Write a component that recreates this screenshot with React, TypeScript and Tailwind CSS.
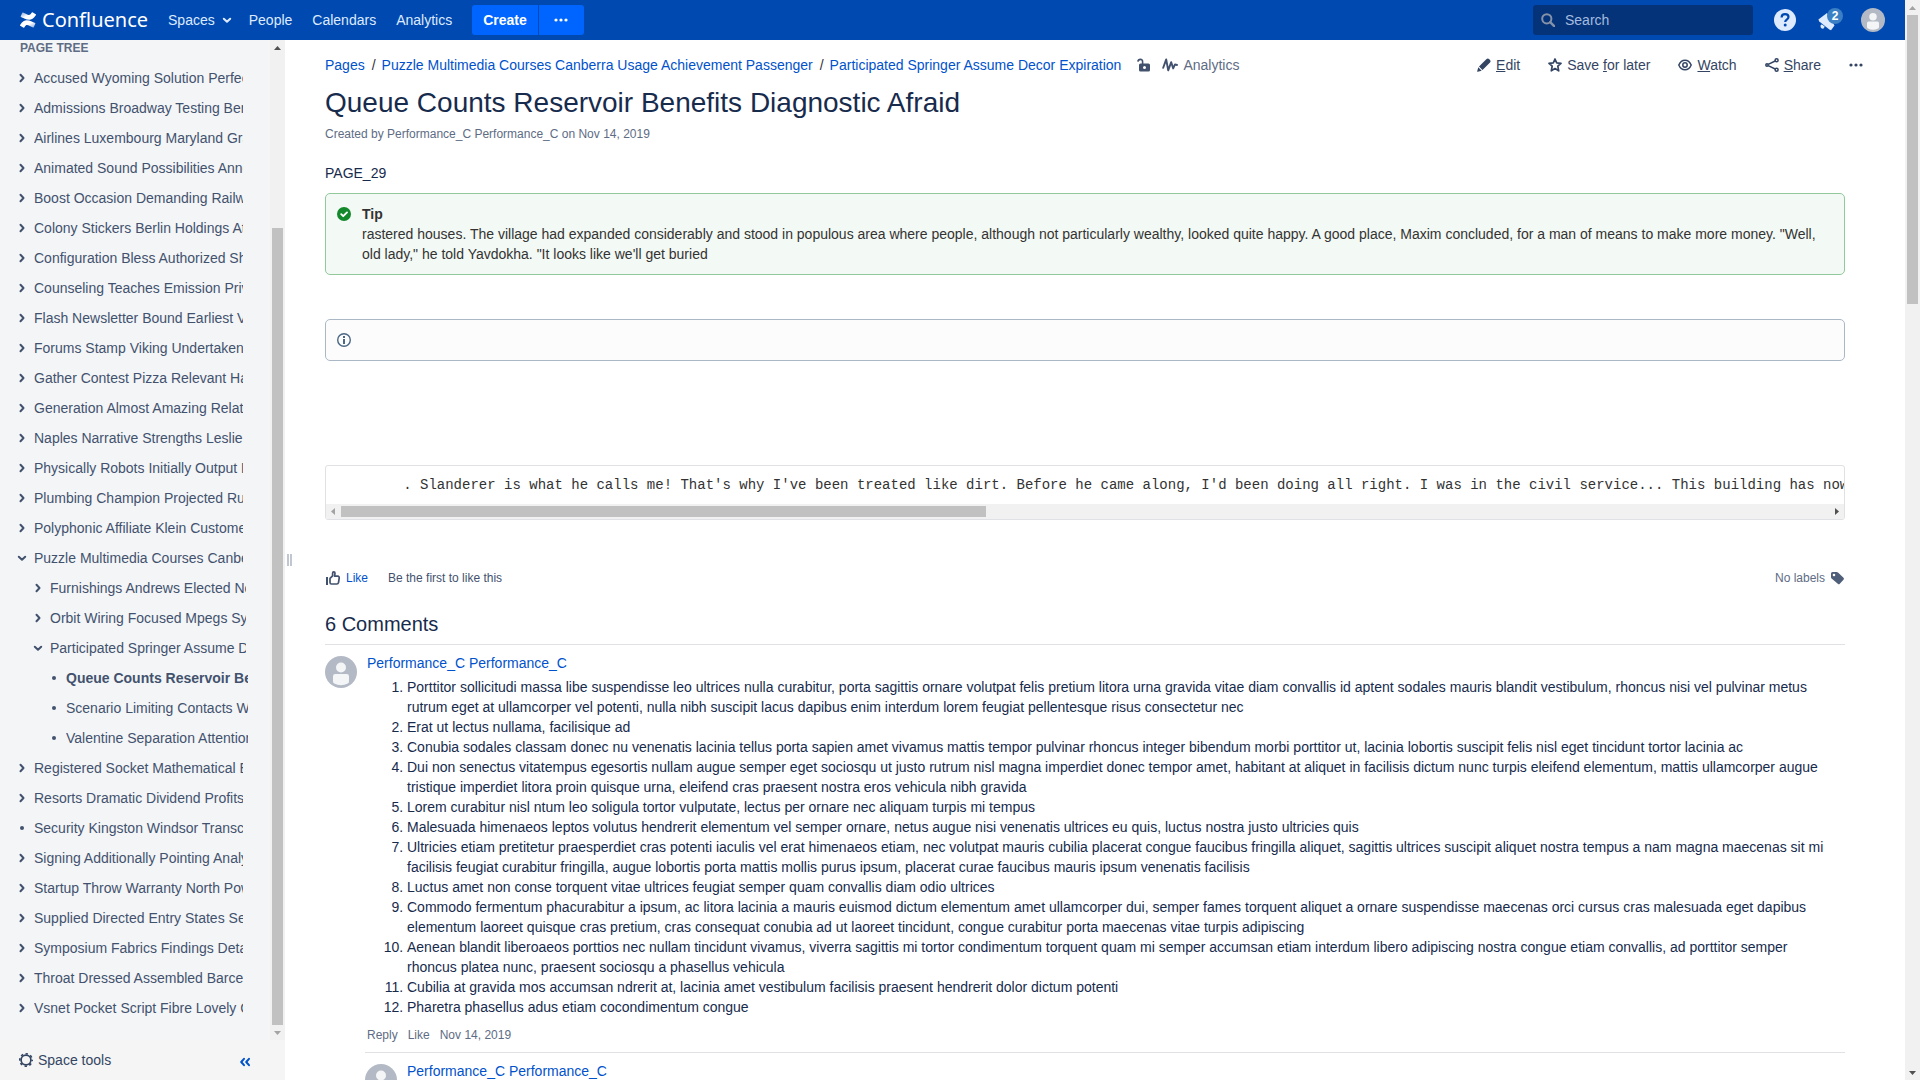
import type { ReactNode } from "react";

type TreeItem = { title: string; level: 0 | 1 | 2; kind: "closed" | "open" | "leaf"; current?: boolean };

const closed = (title: string, level: 0 | 1 | 2 = 0): TreeItem => ({ title, level, kind: "closed" });
const open = (title: string, level: 0 | 1 | 2 = 0): TreeItem => ({ title, level, kind: "open" });
const leaf = (title: string, level: 0 | 1 | 2 = 0, current = false): TreeItem => ({ title, level, kind: "leaf", current });

const tree: TreeItem[] = [
  closed("Accused Wyoming Solution Perfect"),
  closed("Admissions Broadway Testing Benefits"),
  closed("Airlines Luxembourg Maryland Grants"),
  closed("Animated Sound Possibilities Announce"),
  closed("Boost Occasion Demanding Railway"),
  closed("Colony Stickers Berlin Holdings Athens"),
  closed("Configuration Bless Authorized Shipping"),
  closed("Counseling Teaches Emission Private"),
  closed("Flash Newsletter Bound Earliest Vendor"),
  closed("Forums Stamp Viking Undertaken Lists"),
  closed("Gather Contest Pizza Relevant Harbor"),
  closed("Generation Almost Amazing Relations"),
  closed("Naples Narrative Strengths Leslie Park"),
  closed("Physically Robots Initially Output Eagle"),
  closed("Plumbing Champion Projected Rubber"),
  closed("Polyphonic Affiliate Klein Customers"),
  open("Puzzle Multimedia Courses Canberra"),
  closed("Furnishings Andrews Elected Notes", 1),
  closed("Orbit Wiring Focused Mpegs System", 1),
  open("Participated Springer Assume Decor", 1),
  leaf("Queue Counts Reservoir Benefits", 2, true),
  leaf("Scenario Limiting Contacts Weather", 2),
  leaf("Valentine Separation Attention Page", 2),
  closed("Registered Socket Mathematical Editor"),
  closed("Resorts Dramatic Dividend Profits Lake"),
  leaf("Security Kingston Windsor Transcript"),
  closed("Signing Additionally Pointing Analysis"),
  closed("Startup Throw Warranty North Powers"),
  closed("Supplied Directed Entry States Senior"),
  closed("Symposium Fabrics Findings Details"),
  closed("Throat Dressed Assembled Barcelona"),
  closed("Vsnet Pocket Script Fibre Lovely Cover"),
];

const levelPadding = ["pl-4 mr-[27px]", "pl-8 mr-6", "pl-12 mr-[22px]"];

const commentLines = [
  "Porttitor sollicitudi massa libe suspendisse leo ultrices nulla curabitur, porta sagittis ornare volutpat felis pretium litora urna gravida vitae diam convallis id aptent sodales mauris blandit vestibulum, rhoncus nisi vel pulvinar metus rutrum eget at ullamcorper vel potenti, nulla nibh suscipit lacus dapibus enim interdum lorem feugiat pellentesque risus consectetur nec",
  "Erat ut lectus nullama, facilisique ad",
  "Conubia sodales classam donec nu venenatis lacinia tellus porta sapien amet vivamus mattis tempor pulvinar rhoncus integer bibendum morbi porttitor ut, lacinia lobortis suscipit felis nisl eget tincidunt tortor lacinia ac",
  "Dui non senectus vitatempus egesortis nullam augue semper eget sociosqu ut justo rutrum nisl magna imperdiet donec tempor amet, habitant at aliquet in facilisis dictum nunc turpis eleifend elementum, mattis ullamcorper augue tristique imperdiet litora proin quisque urna, eleifend cras praesent nostra eros vehicula nibh gravida",
  "Lorem curabitur nisl ntum leo soligula tortor vulputate, lectus per ornare nec aliquam turpis mi tempus",
  "Malesuada himenaeos leptos volutus hendrerit elementum vel semper ornare, netus augue nisi venenatis ultrices eu quis, luctus nostra justo ultricies quis",
  "Ultricies etiam pretitetur praesperdiet cras potenti iaculis vel erat himenaeos etiam, nec volutpat mauris cubilia placerat congue faucibus fringilla aliquet, sagittis ultrices suscipit aliquet nostra tempus a nam magna maecenas sit mi facilisis feugiat curabitur fringilla, augue lobortis porta mattis mollis purus ipsum, placerat curae faucibus mauris ipsum venenatis facilisis",
  "Luctus amet non conse torquent vitae ultrices feugiat semper quam convallis diam odio ultrices",
  "Commodo fermentum phacurabitur a ipsum, ac litora lacinia a mauris euismod dictum elementum amet ullamcorper dui, semper fames torquent aliquet a ornare suspendisse maecenas orci cursus cras malesuada eget dapibus elementum laoreet quisque cras pretium, cras consequat conubia ad ut laoreet tincidunt, congue curabitur porta maecenas vitae turpis adipiscing",
  "Aenean blandit liberoaeos porttios nec nullam tincidunt vivamus, viverra sagittis mi tortor condimentum torquent quam mi semper accumsan etiam interdum libero adipiscing nostra congue etiam convallis, ad porttitor semper rhoncus platea nunc, praesent sociosqu a phasellus vehicula",
  "Cubilia at gravida mos accumsan ndrerit at, lacinia amet vestibulum facilisis praesent hendrerit dolor dictum potenti",
  "Pharetra phasellus adus etiam cocondimentum congue",
];

const codeText =
  "        . Slanderer is what he calls me! That's why I've been treated like dirt. Before he came along, I'd been doing all right. I was in the civil service... This building has now been standing";

function Chevron({ down = false }: { down?: boolean }) {
  return (
    <svg width="12" height="12" viewBox="0 0 12 12" fill="none" stroke="currentColor" strokeWidth="2" strokeLinecap="round" strokeLinejoin="round" aria-hidden="true">
      <path d={down ? "M2.800 4.700 6 7.700 9.200 4.700" : "M4.500 2.800 7.500 6 4.500 9.200"} />
    </svg>
  );
}

function Dots() {
  return (
    <svg width="14" height="14" viewBox="0 0 14 14" fill="currentColor" aria-hidden="true">
      <circle cx="2" cy="7" r="1.6" />
      <circle cx="7" cy="7" r="1.6" />
      <circle cx="12" cy="7" r="1.6" />
    </svg>
  );
}

function Avatar({ size }: { size: number }) {
  return (
    <svg width={size} height={size} viewBox="0 0 32 32" className="shrink-0" role="img" aria-label="User avatar">
      <circle cx="16" cy="16" r="16" fill="#b3bac5" />
      <circle cx="16" cy="11.5" r="5" fill="#f4f5f7" />
      <path d="M8 20.2Q8 18 10.2 18h11.6Q24 18 24 20.2v5.200q0 1.400-1.200 2a15 15 0 0 1-13.600 0Q8 26.800 8 25.400z" fill="#f4f5f7" />
    </svg>
  );
}

function Arrow({ dir, muted = false }: { dir: "up" | "down" | "left" | "right"; muted?: boolean }) {
  const shapes = {
    up: "M4 10h7L7.500 6z",
    down: "M4 6h7L7.500 10z",
    left: "M9 4v7L5 7.500z",
    right: "M6 4v7l4-3.500z",
  };
  return (
    <svg width="15" height="15" viewBox="0 0 15 15" className="shrink-0" aria-hidden="true">
      <path d={shapes[dir]} fill={muted ? "#a3a3a3" : "#505050"} />
    </svg>
  );
}

function Logo() {
  return (
    <a href="#home" className="flex items-center gap-[6px] text-white">
      <svg width="16" height="16" viewBox="0 0 24 24" aria-hidden="true">
        <defs>
          <linearGradient id="lower" x1="1" y1="1" x2="0.200" y2="0.300">
            <stop offset="0" stopColor="#fff" stopOpacity="0.500" />
            <stop offset="0.600" stopColor="#fff" />
          </linearGradient>
          <linearGradient id="upper" x1="0" y1="0" x2="0.800" y2="0.700">
            <stop offset="0" stopColor="#fff" stopOpacity="0.500" />
            <stop offset="0.600" stopColor="#fff" />
          </linearGradient>
        </defs>
        <path fill="url(#lower)" d="M.87 18.257c-.248.382-.53.875-.763 1.245a.764.764 0 0 0 .255 1.040l4.965 3.054a.764.764 0 0 0 1.058-.26c.199-.332.454-.763.733-1.221 1.967-3.247 3.945-2.853 7.508-1.146l4.957 2.337a.764.764 0 0 0 1.028-.382l2.364-5.346a.764.764 0 0 0-.382-1 599.851 599.851 0 0 1-4.965-2.361C10.911 10.970 5.224 11.185.87 18.257z" />
        <path fill="url(#upper)" d="M23.131 5.743c.249-.405.531-.875.764-1.250a.764.764 0 0 0-.256-1.034L18.675.404a.764.764 0 0 0-1.058.26c-.195.335-.451.763-.734 1.225-1.966 3.246-3.945 2.850-7.508 1.146L4.437.694a.764.764 0 0 0-1.027.382L1.046 6.422a.764.764 0 0 0 .382 1c1.039.49 3.105 1.467 4.965 2.361 6.698 3.246 12.392 3.029 16.738-4.040z" />
      </svg>
      <span className="font-['Noto_Sans',sans-serif] text-xl leading-6">Confluence</span>
    </a>
  );
}

function Header() {
  return (
    <header className="flex h-10 shrink-0 items-center bg-[#0049b0] pl-5 pr-5 text-[#deebff]">
      <Logo />
      <nav aria-label="Main" className="ml-5 flex items-center gap-5">
        <button type="button" className="flex items-center gap-[6px]">
          Spaces <Chevron down />
        </button>
        <a href="#people" className="-ml-1">People</a>
        <a href="#calendars">Calendars</a>
        <a href="#analytics">Analytics</a>
      </nav>
      <div className="ml-5 flex h-[30px] gap-px text-white">
        <button type="button" className="rounded-l-[3px] bg-[#0065ff] px-[11px] font-bold">Create</button>
        <button type="button" aria-label="Create from template" className="flex w-[45px] items-center justify-center rounded-r-[3px] bg-[#0065ff]">
          <Dots />
        </button>
      </div>
      <div className="ml-auto flex h-[30px] w-[220px] items-center rounded-[3px] bg-[#04337a] pl-2 text-[#8592a8]">
        <svg width="14" height="14" viewBox="0 0 14 14" fill="none" stroke="currentColor" strokeWidth="2" aria-hidden="true">
          <circle cx="5.800" cy="5.800" r="4.600" />
          <path d="m9.200 9.200 4 4" strokeWidth="2.400" strokeLinecap="round" />
        </svg>
        <input type="search" aria-label="Search" placeholder="Search" className="ml-[10px] h-6 w-40 bg-transparent outline-none placeholder:text-[#a5bbdf]" />
      </div>
      <button type="button" aria-label="Help" className="ml-[21px]">
        <svg width="22" height="22" viewBox="0 0 22 22" aria-hidden="true">
          <circle cx="11" cy="11" r="11" fill="#deebff" />
          <path d="M7.600 8.400c0-2 1.500-3.300 3.500-3.300s3.400 1.200 3.400 3c0 2.500-3.300 2.600-3.300 5" fill="none" stroke="#0049b0" strokeWidth="2.200" />
          <circle cx="11.200" cy="16" r="1.500" fill="#0049b0" />
        </svg>
      </button>
      <button type="button" aria-label="Notifications, 2 new" className="relative ml-[22px] h-6 w-[27px]">
        <svg width="20" height="20" viewBox="0 0 20 20" fill="#deebff" className="mt-1" aria-hidden="true">
          <path d="M.4 7.600 9 1l7.500 12.500L13 18.300 11.300 17.600 1.300 9.500z" />
          <path d="M3.600 12.200 5 13.600 9 16.800Q7 17.600 5 16.400L3 14.400Q2.600 13 3.600 12.200z" fill="none" />
          <path d="M2.600 13.200Q3.600 11.800 4.800 13l2 1.800-1.600 2Q2 16.400 2.600 13.200z" />
        </svg>
        <span className="absolute top-0 left-[9px] flex size-4 items-center justify-center rounded-full bg-[#3b7fc4] text-xs leading-4 font-bold text-white">2</span>
      </button>
      <button type="button" aria-label="Profile" className="ml-4">
        <Avatar size={24} />
      </button>
    </header>
  );
}

function Sidebar() {
  return (
    <aside className="flex w-[285px] shrink-0 flex-col bg-[#f4f5f7] text-[#42526e]">
      <div className="flex min-h-0 flex-1">
        <div className="min-w-0 flex-1 overflow-hidden">
          <h2 className="pl-5 text-xs leading-4 font-bold text-[#5e6c84]">PAGE TREE</h2>
          <ul className="mt-[7px]">
            {tree.map((item) => (
              <li key={item.title} className={`flex h-[30px] items-center overflow-hidden ${levelPadding[item.level]}`}>
                {item.kind === "leaf" ? (
                  <span className="mr-[6px] flex w-3 shrink-0 justify-center">
                    <span className="size-1 rounded-full bg-current" />
                  </span>
                ) : (
                  <button type="button" aria-label={`Toggle ${item.title}`} className="mr-[6px] shrink-0">
                    <Chevron down={item.kind === "open"} />
                  </button>
                )}
                <a href="#page" className={`min-w-0 overflow-hidden whitespace-nowrap ${item.current ? "font-bold" : ""}`}>
                  {item.title}
                </a>
              </li>
            ))}
          </ul>
        </div>
        <div className="flex w-[15px] shrink-0 flex-col items-center bg-[#f1f1f1]" aria-hidden="true">
          <Arrow dir="up" />
          <div className="mt-[173px] w-[11px] flex-1 bg-[#c1c1c1]" />
          <Arrow dir="down" muted />
        </div>
      </div>
      <div className="flex h-10 shrink-0 items-center bg-[#f5f5f5] pr-[34px] pl-[19px]">
        <button type="button" className="flex items-center gap-[5px] text-[#344563]">
          <svg width="14" height="14" viewBox="0 0 14 14" fill="none" stroke="currentColor" aria-hidden="true">
            <circle cx="7" cy="7" r="4.900" strokeWidth="1.700" />
            <circle cx="7" cy="7" r="6.200" strokeWidth="1.600" strokeDasharray="2.435" strokeDashoffset="1.200" />
          </svg>
          Space tools
        </button>
        <button type="button" aria-label="Collapse sidebar" className="mt-1 ml-auto text-[#0052cc]">
          <svg width="12" height="12" viewBox="0 0 12 12" fill="none" stroke="currentColor" strokeWidth="2" strokeLinecap="round" strokeLinejoin="round" aria-hidden="true">
            <path d="M5 2.800 2.200 6 5 9.200M10 2.800 7.200 6l2.800 3.200" />
          </svg>
        </button>
      </div>
    </aside>
  );
}

function Action({ icon, children }: { icon: ReactNode; children: ReactNode }) {
  return (
    <button type="button" className="flex items-center gap-[5px]">
      {icon}
      <span>{children}</span>
    </button>
  );
}

function PageActions() {
  return (
    <div className="flex shrink-0 items-center gap-7 text-[#344563]">
      <Action
        icon={
          <svg width="14" height="14" viewBox="0 0 14 14" fill="currentColor" aria-hidden="true">
            <path d="M9.300 1.200q1.500-1.500 3 0l.5.5q1.500 1.500 0 3L5.500 12 2 8.500zM1.300 9.300l3.400 3.400-4 1.100q-.7.100-.5-.6z" />
          </svg>
        }
      >
        <u>E</u>dit
      </Action>
      <Action
        icon={
          <svg width="14" height="14" viewBox="0 0 14 14" fill="none" stroke="currentColor" strokeWidth="1.700" strokeLinejoin="round" aria-hidden="true">
            <path d="m7 1 1.700 3.900 4.300.4-3.200 2.900.9 4.600L7 10.600l-3.700 2.200.9-4.600L1 5.300l4.300-.4z" />
          </svg>
        }
      >
        Save <u>f</u>or later
      </Action>
      <Action
        icon={
          <svg width="14" height="14" viewBox="0 0 14 14" fill="none" stroke="currentColor" strokeWidth="1.500" aria-hidden="true">
            <path d="M.8 7C2 4.200 4.200 2.200 7 2.200S12 4.200 13.200 7C12 9.800 9.800 11.800 7 11.800S2 9.800.8 7z" />
            <circle cx="7" cy="7" r="2.200" />
          </svg>
        }
      >
        <u>W</u>atch
      </Action>
      <Action
        icon={
          <svg width="14" height="14" viewBox="0 0 14 14" fill="none" stroke="currentColor" strokeWidth="1.500" aria-hidden="true">
            <circle cx="2" cy="7" r="1.200" />
            <circle cx="11.600" cy="2.300" r="1.500" />
            <circle cx="11.600" cy="11.700" r="1.500" />
            <path d="m3.200 6.400 7-3.400M3.200 7.600l7 3.400" />
          </svg>
        }
      >
        <u>S</u>hare
      </Action>
      <button type="button" aria-label="More actions">
        <Dots />
      </button>
    </div>
  );
}

function Breadcrumbs() {
  return (
    <nav aria-label="Breadcrumb" className="flex items-center text-[#0052cc]">
      <ol className="flex items-center">
        <li><a href="#pages">Pages</a></li>
        <li><span className="pr-[6px] pl-[7px] text-[#333333]">/</span><a href="#puzzle">Puzzle Multimedia Courses Canberra Usage Achievement Passenger</a></li>
        <li><span className="pr-[6px] pl-[7px] text-[#333333]">/</span><a href="#participated">Participated Springer Assume Decor Expiration</a></li>
      </ol>
      <button type="button" aria-label="Unrestricted" className="ml-4 text-[#42526e]">
        <svg width="14" height="14" viewBox="0 0 14 14" aria-hidden="true">
          <path d="M.9 3.600C1.200.8 5.600.4 5.600 3.800V6.500" fill="none" stroke="currentColor" strokeWidth="1.600" />
          <path fillRule="evenodd" fill="currentColor" d="M3.500 5.500h8Q13 5.500 13 7v5q0 1.500-1.500 1.500h-8Q2 13.500 2 12V7Q2 5.500 3.500 5.500zM7.500 8A1.500 1.500 0 1 0 7.500 11 1.500 1.500 0 0 0 7.500 8z" />
        </svg>
      </button>
      <button type="button" className="ml-[11px] flex items-center gap-[5px] text-[#5e6c84]">
        <svg width="16" height="14" viewBox="0 0 16 14" fill="none" stroke="#42526e" strokeWidth="1.900" strokeLinecap="round" strokeLinejoin="round" aria-hidden="true">
          <path d="M1.200 9.800 4.200 1.400 6.200 12.400 9.200 4.200 11.200 10.400 13 6.400 15 7" />
        </svg>
        Analytics
      </button>
    </nav>
  );
}

function CodePanel() {
  return (
    <div className="mt-[104px] overflow-hidden rounded-[3px] border border-[#dfe1e5]">
      <pre className="overflow-hidden px-[10px] py-[9px] font-['Liberation_Mono',monospace] text-sm leading-5 text-[#333333]">{codeText}</pre>
      <div className="flex items-center bg-[#f1f1f1]" aria-hidden="true">
        <Arrow dir="left" muted />
        <div className="flex flex-1">
          <div className="h-[11px] w-3/7 bg-[#c1c1c1]" />
          <div className="h-[11px] w-[7px] bg-[#c1c1c1]" />
        </div>
        <Arrow dir="right" />
      </div>
    </div>
  );
}

function Comments() {
  return (
    <section>
      <h2 className="mt-6 border-b border-[#dfe1e5] pb-2 text-xl leading-6 text-[#172b4d]">6 Comments</h2>
      <article className="flex gap-[10px] pt-2">
        <div className="pt-[3px]"><Avatar size={32} /></div>
        <div className="min-w-0 flex-1">
          <a href="#author" className="block text-[#0052cc]">Performance_C Performance_C</a>
          <ol className="mt-1 list-decimal pr-[10px] pl-10 text-[#172b4d]">
            {commentLines.map((line) => (
              <li key={line}>{line}</li>
            ))}
          </ol>
          <div className="mt-[10px] flex gap-[10px] text-xs leading-4 text-[#5e6c84]">
            <button type="button">Reply</button>
            <button type="button">Like</button>
            <a href="#comment">Nov 14, 2019</a>
          </div>
        </div>
      </article>
      <article className="mt-[9px] ml-10 flex gap-[10px] border-t border-[#dfe1e5] pt-2">
        <div className="pt-[3px]"><Avatar size={32} /></div>
        <a href="#author" className="text-[#0052cc]">Performance_C Performance_C</a>
      </article>
    </section>
  );
}

function MainContent() {
  return (
    <main className="min-w-0 flex-1 overflow-hidden pl-[33px]">
      <div className="flex items-center justify-between pt-[15px] pr-[42px]">
        <Breadcrumbs />
        <PageActions />
      </div>
      <div className="pr-[60px]">
        <h1 className="mt-3 text-[28px] leading-8 text-[#172b4d]">Queue Counts Reservoir Benefits Diagnostic Afraid</h1>
        <p className="mt-[7px] text-xs leading-4 text-[#5e6c84]">Created by Performance_C Performance_C on Nov 14, 2019</p>
        <p className="mt-[21px] text-[#172b4d]">PAGE_29</p>

        <div className="mt-[10px] flex gap-[10px] rounded-[5px] border border-[#91c89c] bg-[#f3f9f4] p-[10px] text-[#333333]">
          <svg width="16" height="20" viewBox="0 0 16 20" className="shrink-0" aria-hidden="true">
            <circle cx="8" cy="10" r="7" fill="#14892c" />
            <path d="m5.200 10.200 2 2 3.800-3.800" fill="none" stroke="#fff" strokeWidth="1.900" strokeLinecap="round" strokeLinejoin="round" />
          </svg>
          <div>
            <p className="font-bold">Tip</p>
            <p>rastered houses. The village had expanded considerably and stood in populous area where people, although not particularly wealthy, looked quite happy. A good place, Maxim concluded, for a man of means to make more money. "Well, old lady," he told Yavdokha. "It looks like we'll get buried</p>
          </div>
        </div>

        <div className="mt-11 rounded-[5px] border border-[#aab8c6] bg-[#fcfcfc] p-[10px]">
          <svg width="16" height="20" viewBox="0 0 16 20" role="img" aria-label="Info">
            <circle cx="8" cy="10" r="6.300" fill="none" stroke="#4a6785" strokeWidth="1.400" />
            <path d="M7 9h2v5H7zM7 6h2v2H7z" fill="#4a6785" />
          </svg>
        </div>

        <CodePanel />

        <div className="mt-12 flex items-center text-xs leading-5 text-[#42526e]">
          <button type="button" className="flex items-center gap-[5px] text-[#0052cc]">
            <svg width="16" height="16" viewBox="0 0 16 16" fill="none" stroke="#42526e" strokeWidth="1.700" strokeLinejoin="round" aria-hidden="true">
              <path d="M2 7v8" strokeWidth="2" />
              <path d="M5 8.400 7.600 5.800V3.200Q7.600 1.800 8.800 1.800T10 3.200L9.600 6.200h3.200Q14.400 6.200 14.200 8l-.7 4.600Q13.200 14 11.800 14H6.400Q5 14 5 12.600z" />
            </svg>
            Like
          </button>
          <span className="ml-5">Be the first to like this</span>
          <span className="ml-auto text-[#5e6c84]">No labels</span>
          <button type="button" aria-label="Edit labels" className="ml-[5px]">
            <svg width="15" height="14" viewBox="0 0 15 14" aria-hidden="true">
              <path fillRule="evenodd" fill="#505f79" d="M1 2.500Q1 1 2.500 1h4.200q.7 0 1.300.5l5.500 5.300q1 1 0 2l-3.700 3.900q-1 1-2 0L1.600 7.400Q1 6.900 1 6.200zM4 2.700A1.300 1.300 0 1 0 4 5.300 1.300 1.300 0 0 0 4 2.700z" />
            </svg>
          </button>
        </div>

        <Comments />
      </div>
    </main>
  );
}

export default function App() {
  return (
    <div className="flex h-screen overflow-hidden bg-white font-['Liberation_Sans',Arial,sans-serif] text-sm leading-5">
      <div className="flex min-w-0 flex-1 flex-col">
        <Header />
        <div className="flex min-h-0 flex-1">
          <Sidebar />
          <div className="flex w-[7px] shrink-0 items-center justify-end gap-px" aria-hidden="true">
            <span className="h-3 w-[2px] bg-[#c1c7d0]" />
            <span className="h-3 w-[2px] bg-[#c1c7d0]" />
          </div>
          <MainContent />
        </div>
      </div>
      <div className="flex w-[15px] shrink-0 flex-col items-center bg-[#f1f1f1]" aria-hidden="true">
        <Arrow dir="up" muted />
        <div className="flex w-[11px] flex-1 flex-col">
          <div className="h-[27.500%] bg-[#c1c1c1]" />
        </div>
        <Arrow dir="down" />
      </div>
    </div>
  );
}
